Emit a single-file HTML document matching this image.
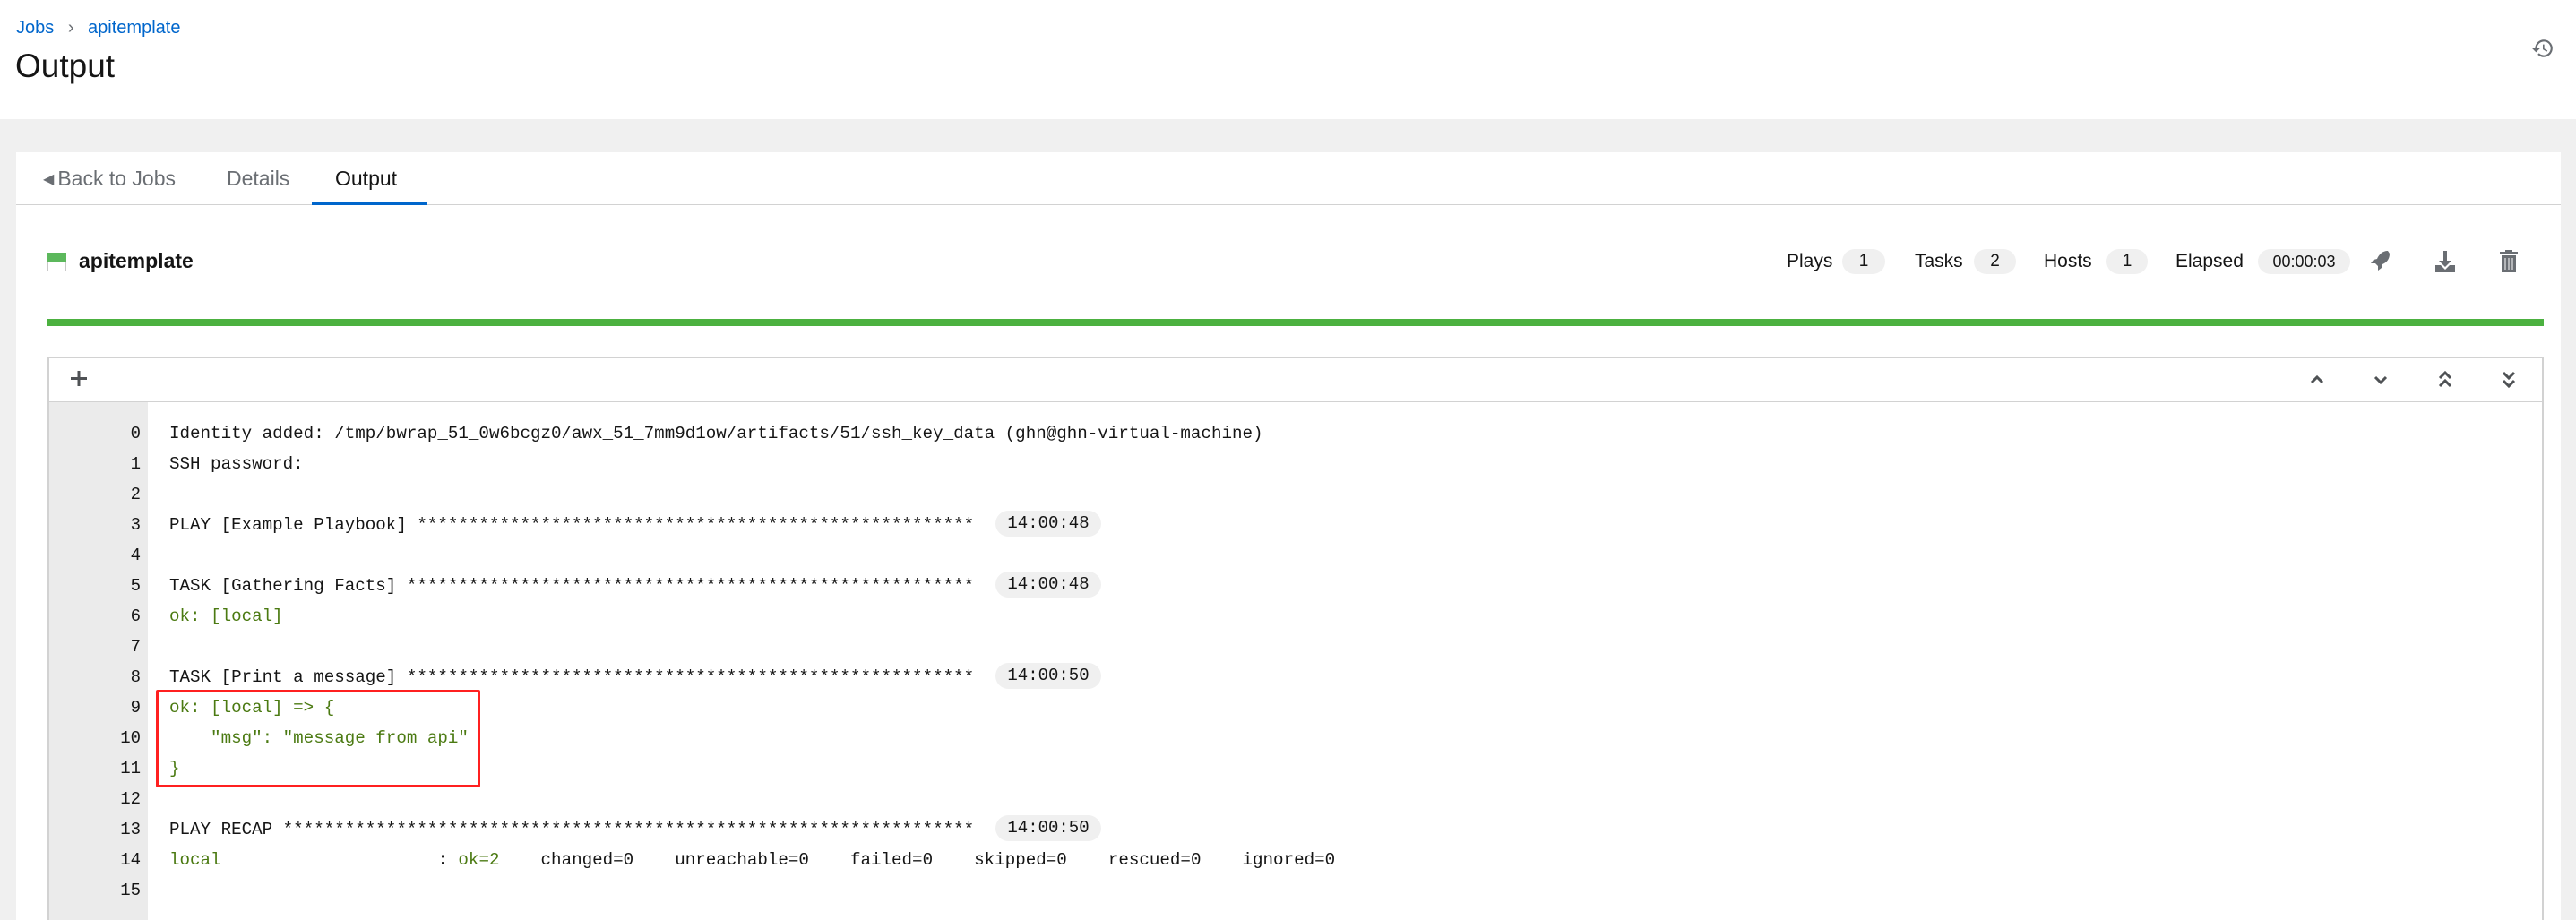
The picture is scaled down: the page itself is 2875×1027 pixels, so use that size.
<!DOCTYPE html>
<html style="width:2875px;height:1027px;overflow:hidden"><head><meta charset="utf-8"><style>
*{box-sizing:border-box;margin:0;padding:0}
body{width:2875px;height:1027px;overflow:hidden;background:#f0f0f0;font-family:"Liberation Sans",sans-serif;color:#151515;position:relative}
.hdr{position:absolute;left:0;top:0;width:2875px;height:133px;background:#fff}
.abs{position:absolute;white-space:nowrap}
.card{position:absolute;left:18px;top:170px;width:2840px;height:857px;background:#fff}
.badge{position:absolute;height:28px;background:#f0f0f0;border-radius:14px;font-size:19px;line-height:28px;text-align:center;color:#151515}
.log{position:absolute;left:53px;top:398px;width:2786px;height:629px;border:2px solid #d2d2d2;border-bottom:none;background:#fff}
.gut{position:absolute;left:55px;top:449px;width:110px;height:578px;background:#ebebeb}
.ln{position:absolute;left:53px;width:104px;text-align:right;font-family:"Liberation Mono",monospace;font-size:19px;line-height:34px;color:#151515}
.tx{position:absolute;left:189px;font-family:"Liberation Mono",monospace;font-size:19.2px;line-height:34px;white-space:pre;color:#151515}
.g{color:#4b7a12}
.ts{position:absolute;left:1111px;width:118px;height:29px;background:#f0f0f0;border-radius:15px;font-family:"Liberation Mono",monospace;font-size:19px;line-height:29px;text-align:center}
</style></head><body>
<div class="hdr"></div>
<div class="abs" style="left:18px;top:20px;font-size:20px;color:#0066cc">Jobs <span style="color:#6a6e73;margin:0 10px">›</span> apitemplate</div>
<div class="abs" style="left:17px;top:53px;font-size:37px;color:#151515">Output</div>
<svg class="abs" style="left:2825px;top:41px" width="26" height="26" viewBox="0 0 24 24"><path d="M13 3a9 9 0 0 0-9 9H1l4 4 4-4H6a7 7 0 1 1 2.05 4.95l-1.42 1.42A9 9 0 1 0 13 3z" fill="#6a6e73"/><path d="M12 8v5l4 2.5.8-1.3-3.3-2V8z" fill="#6a6e73"/></svg>

<div class="card"></div>
<div class="abs" style="left:48px;top:186px;font-size:23px;color:#6a6e73"><span style="font-size:16px;position:relative;top:-2px;margin-right:4px">◀</span>Back to Jobs</div>
<div class="abs" style="left:253px;top:186px;font-size:23px;color:#6a6e73">Details</div>
<div class="abs" style="left:374px;top:186px;font-size:23px;color:#151515">Output</div>
<div class="abs" style="left:18px;top:228px;width:2840px;height:1px;background:#d2d2d2"></div>
<div class="abs" style="left:348px;top:225px;width:129px;height:4px;background:#0066cc"></div>

<div class="abs" style="left:53px;top:282px;width:21px;height:21px;border:1px solid #c8c8c8;background:#fff"></div>
<div class="abs" style="left:53px;top:282px;width:21px;height:11px;background:#5cb85c"></div>
<div class="abs" style="left:88px;top:278px;font-size:23px;font-weight:bold">apitemplate</div>

<div class="abs" style="left:1994px;top:280px;font-size:21px">Plays</div>
<div class="badge" style="left:2056px;top:278px;width:48px">1</div>
<div class="abs" style="left:2137px;top:280px;font-size:21px">Tasks</div>
<div class="badge" style="left:2203px;top:278px;width:47px">2</div>
<div class="abs" style="left:2281px;top:280px;font-size:21px">Hosts</div>
<div class="badge" style="left:2351px;top:278px;width:46px">1</div>
<div class="abs" style="left:2428px;top:280px;font-size:21px">Elapsed</div>
<div class="badge" style="left:2520px;top:278px;width:103px;font-size:18px">00:00:03</div>
<svg class="abs" style="left:2645px;top:279px" width="24" height="26" viewBox="0 0 24 26"><path d="M20 1c-6 0-10 4-12 9l-4 1-3 4 5 0 3 3 0 5 4-3 1-4c5-2 8-6 8-12z" fill="#6a6e73"/></svg>
<svg class="abs" style="left:2717px;top:279px" width="24" height="26" viewBox="0 0 24 26"><path d="M10 1h4v11h5l-7 7-7-7h5z" fill="#6a6e73"/><path d="M1 17h6l5 5 5-5h6v8H1z" fill="#6a6e73"/></svg>
<svg class="abs" style="left:2789px;top:278px" width="22" height="27" viewBox="0 0 22 27"><path d="M7 1h8v2h6v3H1V3h6z" fill="#6a6e73"/><path d="M3 7h16v19H3z" fill="#6a6e73"/><path d="M7 10v13M11 10v13M15 10v13" stroke="#fff" stroke-width="1"/></svg>

<div class="abs" style="left:53px;top:356px;width:2786px;height:8px;background:#4cb140"></div>

<div class="log"></div>
<div class="abs" style="left:53px;top:448px;width:2786px;height:1px;background:#d2d2d2"></div>
<div class="gut"></div>
<svg class="abs" style="left:78px;top:413px" width="20" height="20" viewBox="0 0 20 20"><path d="M8.5 1h3v17h-3zM1 8h18v3H1z" fill="#4f5255"/></svg>
<svg class="abs" style="left:2576px;top:416px" width="20" height="16" viewBox="0 0 20 16"><path d="M4 11l6-6 6 6" stroke="#4f5255" stroke-width="3" fill="none"/></svg>
<svg class="abs" style="left:2647px;top:416px" width="20" height="16" viewBox="0 0 20 16"><path d="M4 5l6 6 6-6" stroke="#4f5255" stroke-width="3" fill="none"/></svg>
<svg class="abs" style="left:2719px;top:412px" width="20" height="24" viewBox="0 0 20 24"><path d="M4 10l6-6 6 6M4 19l6-6 6 6" stroke="#4f5255" stroke-width="3" fill="none"/></svg>
<svg class="abs" style="left:2790px;top:412px" width="20" height="24" viewBox="0 0 20 24"><path d="M4 4l6 6 6-6M4 13l6 6 6-6" stroke="#4f5255" stroke-width="3" fill="none"/></svg>

<div class="ln" style="top:467px">0<br>1<br>2<br>3<br>4<br>5<br>6<br>7<br>8<br>9<br>10<br>11<br>12<br>13<br>14<br>15</div>
<div class="tx" style="top:467px">Identity added: /tmp/bwrap_51_0w6bcgz0/awx_51_7mm9d1ow/artifacts/51/ssh_key_data (ghn@ghn-virtual-machine)
SSH password:

PLAY [Example Playbook] ******************************************************

TASK [Gathering Facts] *******************************************************
<span class="g">ok: [local]</span>

TASK [Print a message] *******************************************************
<span class="g">ok: [local] =&gt; {</span>
<span class="g">    "msg": "message from api"</span>
<span class="g">}</span>

PLAY RECAP *******************************************************************
<span class="g">local</span>                     : <span class="g">ok=2</span>    changed=0    unreachable=0    failed=0    skipped=0    rescued=0    ignored=0</div>
<div class="ts" style="top:570px">14:00:48</div>
<div class="ts" style="top:638px">14:00:48</div>
<div class="ts" style="top:740px">14:00:50</div>
<div class="ts" style="top:910px">14:00:50</div>
<div class="abs" style="left:174px;top:770px;width:362px;height:109px;border:3px solid #ff2020;border-radius:2px"></div>
</body></html>
